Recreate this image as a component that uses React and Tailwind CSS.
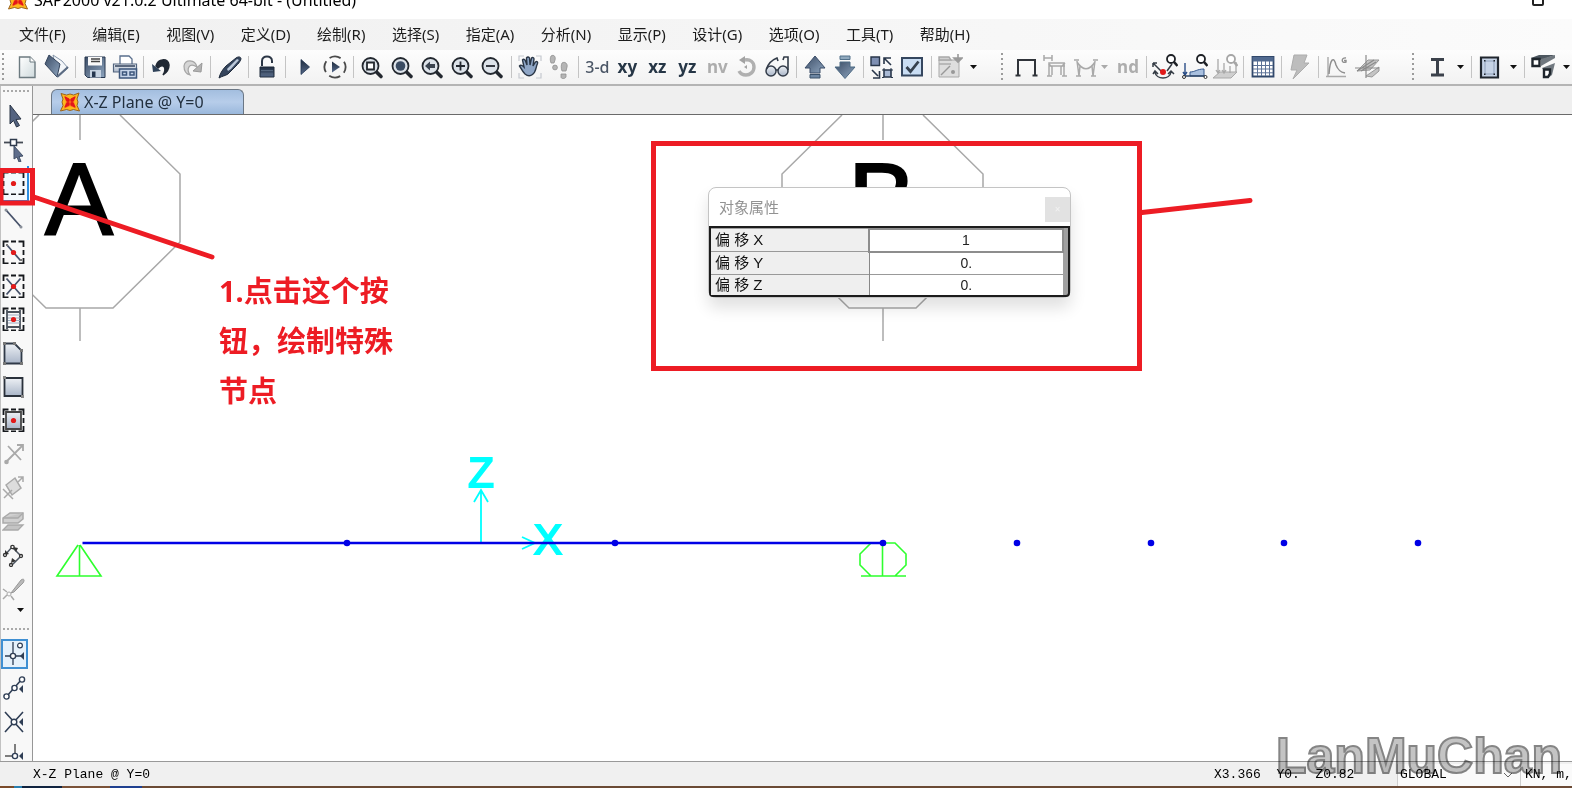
import React from "react";

const N = "#2f3e55";
const G = "#a9a9a9";

function Ico({ children, size = 26 }) {
  return (
    <svg width={size} height={size} viewBox={`0 0 ${size} ${size}`} fill="none" className="shrink-0" aria-hidden="true">
      {children}
    </svg>
  );
}

function Lens({ children }) {
  return (
    <Ico>
      <path d="M17 17.500l5 5" stroke="#23282f" strokeWidth="3.600" strokeLinecap="round" />
      <circle cx="11.500" cy="12" r="8" fill="#dde3ea" stroke="#23282f" strokeWidth="1.800" />
      {children}
    </Ico>
  );
}

function Star({ size = 20 }) {
  return (
    <svg width={size} height={size} viewBox="0 0 20 20" className="shrink-0" aria-hidden="true">
      <path d="M1 1.500L6.500 3 10 2 13.500 3 19 1 17 7 18 10 17 13.500 19.500 19 13.500 17.500 10 18.500 6.500 17.500.5 19 3 13.500 2 10 3 7z" fill="#fdb91e" stroke="#9a6420" strokeWidth="1" />
      <path d="M4 3.500l6 3.500 6-3.500L14 10l2 6.500L10 14l-6 2.500L6 10z" fill="#f9651b" />
      <path d="M5 5l4 2v2.200H7zM15 5l-4 2v2.200h2zM5 15l4-2v-2.200H7zM15 15l-4-2v-2.200h2z" fill="#e3151b" stroke="#e3151b" />
    </svg>
  );
}

const Word = ({ t, dim, light }) => (
  <span className={`font-['Noto_Sans'] leading-5 ${light ? "text-[16px] font-medium text-[#4b5666]" : dim ? "text-[17px] font-bold text-[#adadad]" : "text-[17px] font-bold text-[#263646]"}`}>{t}</span>
);

const miniLens = (c) => (
  <>
    <circle cx="19" cy="5" r="4" fill="#fff" stroke={c} strokeWidth="1.800" />
    <path d="M22 8l3.500 4" stroke={c} strokeWidth="2.600" />
  </>
);

const mainTools = [
  ["新建", <Ico><path d="M5.500 3h10.500l5 5v15.500h-15.500z" fill="url(#paper)" stroke="#6c7a80" strokeWidth="1.400" /><path d="M16 3v5h5" fill="#fff" stroke="#6c7a80" /></Ico>],
  ["打开", <Ico><path d="M9 1l9 6 6 7-10 9z" fill="#f3f6f9" stroke="#8797ab" /><path d="M5 1l11 9-3 13L1 10z" fill="url(#slate)" stroke="#34445c" /><path d="M13 23l11-10" stroke="#5b6b82" strokeWidth="2" /></Ico>],
  "|",
  ["保存", <Ico><path d="M3 3h20v20.500H5.500L3 21z" fill="url(#slate)" stroke="#26374f" /><path d="M6 3h14v8.500H6z" fill="#fafafa" /><path d="M9 5h9M9 7.500h9" stroke="#444" strokeWidth="1.300" /><path d="M8 16h11v7.500H8z" fill="#c6d3e2" /><path d="M10 17.500h3.500V23H10z" fill="#26374f" /></Ico>],
  ["打印", <Ico><path d="M8 10V2h9l3 3v5" fill="#fff" stroke="#5a6f8d" strokeWidth="1.300" /><path d="M1.500 10h23v8h-23z" fill="url(#steel)" stroke="#53657f" strokeWidth="1.200" /><path d="M3 12h20" stroke="#3c4c64" strokeWidth="1.600" /><path d="M7.500 15h17v9h-17z" fill="#c8d6ea" stroke="#3c567b" strokeWidth="1.500" /><path d="M10.500 18h4v3h-4zM18 18h4v3h-4z" stroke="#3c567b" strokeWidth="1.500" /></Ico>],
  "|",
  ["撤销", <Ico><path d="M7 12C9 4 19 4 20 11c0 5-3 8-6 10 4-6 1-13-5-7z" fill="#202833" stroke="#202833" strokeWidth="1.500" /><path d="M3 10l1 8 8-1z" fill="#2f4259" /></Ico>],
  ["重做", <Ico><path d="M18 13C16 5 6 5 5 12c0 5 2 8 6 9-4-6-1-13 7-8z" fill="#d6d6d6" stroke="#a5a5a5" strokeWidth="1.200" /><path d="M23 9l-1 9-8-1z" fill="#b3b3b3" stroke="#999" /></Ico>],
  "|",
  ["编辑", <Ico><path d="M2 24c1-4 3-8 7-12L19 4c3-2 5-1 5 1-1 3-3 5-5 7l-8 8c-3 2-6 2-9 4z" fill="#35455d" stroke="#1e2a3b" /><path d="M10 15L20 5l2 1-8 9-3 2z" fill="#bcc9da" /></Ico>],
  "|",
  ["解锁", <Ico><path d="M8 12V7c0-6 10-6 10 0v2" stroke="#2b3645" strokeWidth="2" /><path d="M6 13h14v10H6z" fill="url(#dark)" stroke="#1f2a3a" /><path d="M7 16.500h12M7 20h12" stroke="#55677f" /></Ico>],
  "|",
  ["运行", <Ico><path d="M9 5.500l8.500 7.500L9 20.500z" fill="url(#dark)" stroke="#1f3350" strokeWidth=".8" /></Ico>],
  ["运行分析", <Ico><circle cx="13" cy="13" r="10.500" stroke="#4a4a4a" strokeWidth="1.800" strokeDasharray="11.500 4.993" transform="rotate(-121 13 13)" /><path d="M10 7.500l8 5.500-8 5.500z" fill="url(#dark)" /></Ico>],
  "|",
  ["窗口缩放", <Lens><path d="M8 8.500h7v7H8z" stroke="#23282f" strokeWidth="1.800" fill="#fff" /></Lens>],
  ["全图", <Lens><circle cx="11.500" cy="12" r="4.800" fill="#3b4c63" /></Lens>],
  ["上一视图", <Lens><path d="M6 12l5-4.500V10h5v4h-5v2.500z" fill="#3b4450" /></Lens>],
  ["放大", <Lens><path d="M11.500 7.500v9M7 12h9" stroke="#23282f" strokeWidth="1.800" /></Lens>],
  ["缩小", <Lens><path d="M7 12h9" stroke="#23282f" strokeWidth="1.800" /></Lens>],
  "|",
  ["平移", <Ico><path d="M2 7V2h5M19 2h5v5M24 19v5h-5M7 24H2v-5" stroke="#c5c9cf" strokeWidth="1.200" /><path d="M8 20C5 17 4 14 2.500 12c1-1.500 3-.5 4.500 1L5.500 6c1-1.500 2.500-.5 3 1l1.500 4-.5-7c1-1.500 2.500-1 3 0l.5 7 1.500-7c1-1 2.500-.5 2.500 1l-1 7 2.500-4c1.500-1 2.500 0 2 1.500-2 4-1 8-5 11-2 1.500-5 1.500-7.500-.5z" fill="#8fa6c6" stroke="#2a3646" strokeWidth="1.400" /></Ico>],
  ["漫游", <Ico><g fill="#b5b5b5" stroke="#8f8f8f" strokeWidth=".8"><path d="M4 2c3-2 5 1 4 4l-1 3H4c-1-3-1-5 0-7zM15 9c3-2 6 1 5 4l-1 4h-4c-1-3-1-6 0-8z" /><circle cx="8" cy="13.500" r="2.400" /><path d="M14 20h5v3c-1 2-5 2-5 0z" /></g></Ico>],
  "|",
  ["三维视图", <Word t="3-d" light />],
  ["xy 平面", <Word t="xy" />],
  ["xz 平面", <Word t="xz" />],
  ["yz 平面", <Word t="yz" />],
  ["命名视图", <Word t="nv" dim />],
  ["旋转", <Ico><path d="M11 6c5-1 9 2 9 7s-4 8-8 8-6-2-7-4" stroke="#b0b0b0" strokeWidth="3.400" /><path d="M11 2v8L5 6zM13 11v4l-3-2z" fill="#a3a3a3" /></Ico>],
  ["透视切换", <Ico><circle cx="7" cy="17" r="5" fill="url(#steel)" stroke="#333c49" strokeWidth="1.500" /><circle cx="19" cy="17" r="5" fill="url(#steel)" stroke="#333c49" strokeWidth="1.500" /><path d="M2.500 15C4 10 8 6 13 4l1 3M24 16V3h-4l-1 3M12 16h2" stroke="#333c49" strokeWidth="1.600" /></Ico>],
  "|",
  ["上移", <Ico><path d="M13 2l10 12h-5v5H8v-5H3z" fill="url(#slate)" stroke="#3a4d69" /><path d="M8 20.500h10v3.500H8z" fill="#6d86a3" stroke="#3a5069" /></Ico>],
  ["下移", <Ico><path d="M13 24.500L3 13h5V8h10v5h5z" fill="url(#slate)" stroke="#4d6a84" /><path d="M8 2h10v3.500H8z" fill="#8fa8bd" stroke="#52708a" /></Ico>],
  "|",
  ["对象收缩", <Ico><path d="M2 3h8.500v8.500H2z" fill="#7e8fb2" stroke="#28364a" strokeWidth="1.400" /><path d="M15 16h7v7h-7z" fill="#a9b9d4" stroke="#28364a" strokeWidth="1.600" /><path d="M13 16h2M22 16h2M13 23.500h2M22 23.500h2M15 14v2M22 14v2" stroke="#28364a" /><path d="M22 11l-7-7M15 10V4H22M3 16l6 6M10.500 17v7H4" stroke="#28364a" strokeWidth="1.600" /></Ico>],
  ["显示选项", <Ico><path d="M3 4h20v17.500H3z" fill="#c9ddf3" stroke="#35475f" strokeWidth="2" /><path d="M7.500 13l4 4.500 8-10" stroke="#35414f" strokeWidth="2.800" /></Ico>],
  "|",
  ["指定", <Ico><path d="M2 6h20v17H2z" fill="#dedede" stroke={G} /><path d="M2 3h10l2 3H2z" fill="#d0d0d0" stroke={G} strokeWidth="1.400" /><path d="M2 10h12" stroke={G} strokeWidth="1.400" /><path d="M4 21L13 12" stroke="#999" strokeWidth="1.400" /><circle cx="16" cy="18" r="2" fill="#999" /><path d="M21 0v5M17 4h8l-4 4z" stroke="#9a9a9a" fill="#9a9a9a" strokeWidth="1.600" /></Ico>],
  "v",
];

const structTools = [
  ["框架", <Ico><path d="M5 21V6h17v15M2.500 21.500h5M19.500 21.500h5" stroke="#30343a" strokeWidth="2" /></Ico>],
  ["框架荷载", <Ico><g stroke={G} strokeWidth="1.500"><path d="M6 22V9h15v13M4 22h5M19 22h5M1 1v6M1 4h8M9 1v6" /><path d="M9 21V13l-3-3M18 21V13l4-4M6 12h16" /></g></Ico>],
  ["变形图", <Ico><g stroke={G} strokeWidth="1.500"><path d="M4 8c6 9 12 9 18 0M4 7l2 15M22 7l-2 15M3 22h5M18 22h5M1 6h5M20 6h5M7 12l-1 10M19 12l1 10" /></g></Ico>],
  "v-",
  ["nd", <Word t="nd" dim />],
  "|",
  ["节点", <Ico><path d="M1 9l8 8M1 9h4M1 9v4M15 17l5-7M3 18c1 8 15 8 16 0M1 20l2-3 3 3M16 20l3-3 3 3" stroke="#353c45" strokeWidth="1.500" />{miniLens("#1d2025")}<circle cx="11" cy="18" r="3" fill="#e01919" /></Ico>],
  ["框架显示", <Ico><path d="M3 9v12M1 18l2 3 2-3" stroke="#2c4f88" strokeWidth="1.400" /><path d="M8 22v-4c5 0 7-3 14-3v7z" fill="#a9c0df" stroke="#35588c" /><path d="M1 22h23" stroke="#2d4566" strokeWidth="1.500" /><circle cx="2" cy="23" r="1.500" fill="#fff" stroke="#333" /><circle cx="23.500" cy="23" r="1.500" fill="#fff" stroke="#333" />{miniLens("#1d2025")}</Ico>],
  ["壳显示", <Ico><path d="M1 24l7-6h17l-6 6z" fill="#cfcfcf" stroke={G} /><path d="M6 5v14M12 9v10M18 12v7M24 8v10M4 16l2 3 2-3M10 16l2 3 2-3" stroke={G} strokeWidth="1.300" />{miniLens("#a6a6a6")}</Ico>],
  "|",
  ["表格", <Ico><path d="M2.500 3h21v19.500h-21z" fill="#fff" stroke="#31486b" strokeWidth="1.800" /><path d="M2.500 3h21v4.500h-21z" fill="#50698f" /><path d="M3 11.500h20M3 15h20M3 18.800h20M7.500 7v15M11.500 7v15M15.500 7v15M19.500 7v15" stroke="#5d7397" /></Ico>],
  "|",
  ["闪电", <Ico><path d="M7 1h13l-3 8h5L6 25l4-9H4z" fill="#bdbdbd" stroke="#adadad" /></Ico>],
  "|",
  ["曲线", <Ico><path d="M4 3v20M2 22.500h20" stroke={G} strokeWidth="1.400" /><path d="M5 20C6 4 10 2 12 11c2 5 4 7 9 8" stroke="#8f8f8f" strokeWidth="1.500" /><path d="M22 4c-5-1-5 6 0 4V6.500h-2" stroke="#8f8f8f" strokeWidth="1.400" /></Ico>],
  ["剖面", <Ico><path d="M3 17L14 6h11l-9 10zM12 22l13-9v4l-7 6z" fill="#c4c4c4" stroke="#999" /><path d="M12 1v23M1 14h24M3 17L20 6M7 17l15-9" stroke="#8a8a8a" strokeWidth="1.200" /></Ico>],
];

const sectionTools = [
  ["工字钢", <Ico><path d="M7 5.500h13M7 21h13M13.500 5v16" stroke="#3b414b" strokeWidth="3" /></Ico>],
  "v",
  "|",
  ["截面", <Ico><path d="M4 3.500h17v20H4z" fill="#c6d3e6" stroke="#20262e" strokeWidth="2.200" /><path d="M8 7h9v13H8z" stroke="#8fa0ba" /><path d="M7 6h1.500v1.500H7zM16.500 6H18v1.500h-1.500zM7 19.500h1.500V21H7zM16.500 19.500H18V21h-1.500z" fill="#20262e" /></Ico>],
  "v",
  "|",
  ["型材", <Ico><path d="M1 4l8-3h16l-14 5z" fill="#4d5760" /><path d="M11 5l14-4v3l-14 8z" fill="#70787f" /><path d="M2.500 5h7v7h-7z" fill="#fff" stroke="#1f262d" strokeWidth="2.400" /><path d="M12 14l13-5-3 12-4 3z" fill="#70787f" /><path d="M14 15.500h6v4l-2 3.500h-4z" fill="#fff" stroke="#1f262d" strokeWidth="2.400" /></Ico>],
  "v",
];

const S = ({ children }) => <Ico size={24}>{children}</Ico>;
const dash = <path d="M1.500 7v-5.500h5M9 1.500h5M16.500 1.500h5V7M21.500 10v5M21.500 18v5.500h-5M14 23.500H9M6.500 23.500h-5V18M1.500 15v-5" stroke="#15181c" strokeWidth="1.800" />;
const red = <circle cx="11.500" cy="12.500" r="2.600" fill="#e21b1b" />;

const drawTools = [
  ["选择", <S><path d="M8 1l11 14-5 .5 3.500 6-3 1.500-3-6.500L8 20z" fill="#546380" stroke="#2b3647" /></S>],
  ["修改形状", <S><path d="M2 4.500h19" stroke="#444b55" strokeWidth="1.800" /><path d="M8.500 1.500h6v6h-6z" fill="#fff" stroke="#2f3b4d" strokeWidth="1.500" /><path d="M12 8l9 10-4 .5 2 5-2 .5-2-5-3 2z" fill="#5e6d8b" stroke="#414f66" /></S>],
  ["绘制特殊节点", <S>{dash}{red}</S>],
  ["绘制框架", <S><path d="M4 4l15 17" stroke="#47526a" strokeWidth="1.800" /><circle cx="4" cy="4" r="1.500" fill="#8a909a" /><circle cx="19" cy="21" r="1.500" fill="#8a909a" /></S>],
  ["快速绘制框架", <S>{dash}<path d="M4.500 4.500l14 16" stroke="#47526a" strokeWidth="1.800" />{red}<path d="M4 4h2v2H4zM18 19h2v2h-2z" fill="#777" /></S>],
  ["快速绘制支撑", <S>{dash}<path d="M4.500 4.500l14 16M18.500 4.500l-14 16" stroke="#47526a" strokeWidth="1.800" />{red}</S>],
  ["快速绘制次梁", <S>{dash}<path d="M5 3v19M18 3v19M5 5h13M5 20h13" stroke="#4b525c" strokeWidth="1.800" /><path d="M6 8h12M6 16h12M6 11h12M6 13.500h12" stroke="#9eacc2" />{red}</S>],
  ["绘制多边形面", <S><path d="M2.500 2.500h10l7 7v13h-17z" fill="url(#steel)" stroke="#303a48" strokeWidth="1.800" /><path d="M1 1h3v3H1zM11 1h3v3h-3zM18 8h3v3h-3zM1 21h3v3H1zM18 21h3v3h-3z" fill="#777" /></S>],
  ["绘制矩形面", <S><path d="M2.500 3h18v18h-18z" fill="url(#steel)" stroke="#2a313b" strokeWidth="1.800" /><path d="M1 1h3v3H1zM19 20h3v3h-3z" fill="#888" /></S>],
  ["快速绘制面", <S>{dash}<path d="M4 4h15v17H4z" fill="url(#steel)" stroke="#444" strokeWidth="1.800" />{red}</S>],
  ["连接", <S><path d="M5 19L20 4M15 3h6v6M6 4l13 14" stroke={G} strokeWidth="1.800" /><circle cx="4.500" cy="20" r="2.300" fill={G} /></S>],
  ["面连接", <S><path d="M4 9l9-7 6 10-9 7z" fill="#ddd" stroke={G} strokeWidth="1.500" /><path d="M2 22l8-8M16 6l5-5M16 1h5v5M1 13l10 10" stroke={G} strokeWidth="1.500" /></S>],
  ["实体", <S><path d="M1 8l7-5h13v6l-5 4H1z" fill="#d0d0d0" stroke={G} strokeWidth="1.500" /><path d="M1 8h15l5-5M1 20l5-5h15l-5 5H1z" fill="#c4c4c4" stroke={G} strokeWidth="1.300" /></S>],
  ["多段线", <S><path d="M3 12l7-8 9 9-9 9" stroke="#4d5662" strokeWidth="1.500" /><path d="M3 12V7l4 4zM11 4l5 1-2 4zM9 20l1-5 4 3z" fill="#333" /><g fill="#fff" stroke="#333" strokeWidth="1.300"><circle cx="3" cy="12" r="1.500" /><circle cx="10.500" cy="4" r="1.700" /><circle cx="19" cy="13" r="1.500" /><circle cx="9" cy="22" r="1.500" /></g></S>],
  ["魔棒", <S><path d="M9 16L19 3c3-2 4 0 2 3L12 15z" fill="#b9b9b9" stroke="#999" /><path d="M1 22l4-4M1 12l4 3M12 23l-3-4" stroke={G} strokeWidth="1.500" /><circle cx="7" cy="17" r="2" stroke={G} /></S>],
];

const snapTools = [
  ["捕捉到点", <S><path d="M10 0v11M10 17v6M2 14h6M12 14h6" stroke={N} strokeWidth="1.300" /><circle cx="10" cy="14" r="2.600" fill="#fff" stroke={N} strokeWidth="1.400" /><circle cx="17" cy="3.500" r="2.400" fill="#fff" stroke={N} strokeWidth="1.200" /><path d="M21 10v8l-4-4z" fill={N} /></S>],
  ["捕捉到中点", <S><path d="M4 20L19 3" stroke={N} strokeWidth="1.600" /><g fill="#fff" stroke={N} strokeWidth="1.400"><circle cx="3.500" cy="20.500" r="2.600" /><circle cx="19" cy="3.500" r="2.600" /><circle cx="11.500" cy="12" r="2.600" /></g><path d="M20 9v8l-4-4z" fill={N} /></S>],
  ["捕捉到交点", <S><path d="M2 2l18 20M20 2L2 22" stroke={N} strokeWidth="1.600" /><circle cx="11" cy="12" r="2.800" fill="#fff" stroke={N} strokeWidth="1.400" /><path d="M20 8v8l-4-4z" fill={N} /></S>],
  ["捕捉到垂足", <S><path d="M12 0v12M2 12h8" stroke="#555" strokeWidth="1.500" /><circle cx="12" cy="12" r="2.600" fill="#fff" stroke={N} strokeWidth="1.400" /><path d="M20 8v8l-4-4z" fill={N} /></S>],
];

function Grip({ items, className = "" }) {
  return (
    <div className={`flex shrink-0 items-center ${className}`}>
      {items.map((it, i) =>
        it === "|" ? (
          <span key={i} className="flex min-w-[7px] flex-1 justify-center"><span className="h-[22px] w-px bg-[#c4c4c4]" /></span>
        ) : it === "v" || it === "v-" ? (
          <button key={i} aria-label="更多" className={it === "v" ? "flex w-4 shrink-0 justify-center" : "flex w-3 shrink-0 justify-start"}>
            <svg width="7" height="4" viewBox="0 0 7 4"><path d="M0 0h7L3.500 4z" fill={it === "v" ? "#111" : "#aaa"} /></svg>
          </button>
        ) : (
          <button key={i} aria-label={it[0]} className="flex h-8 w-[30px] shrink-0 items-center justify-center">{it[1]}</button>
        )
      )}
    </div>
  );
}

const VDots = () => <span className="h-7 w-[2px] shrink-0 bg-[repeating-linear-gradient(180deg,#9b9b9b_0_2px,transparent_2px_5px)]" />;
const HDots = () => <div className="ml-[2px] h-[2px] w-[26px] shrink-0 bg-[repeating-linear-gradient(90deg,#a9a9a9_0_2px,transparent_2px_4px)]" />;

const menus = ["文件(F)", "编辑(E)", "视图(V)", "定义(D)", "绘制(R)", "选择(S)", "指定(A)", "分析(N)", "显示(P)", "设计(G)", "选项(O)", "工具(T)", "帮助(H)"];

function Model() {
  const grid = (cx) => (
    <path d={`M${cx} 0v25M${cx} 193v33M${cx - 41} 0l-60 59v68l67 66h67l67-66v-68l-60-59`} stroke="#a8a8a8" strokeWidth="1.500" />
  );
  return (
    <svg className="absolute inset-0 h-full w-full" fill="none" aria-label="模型">
      {grid(47)}
      {grid(850)}
      <g fill="#000" stroke="#000" strokeWidth="2" fontFamily="Liberation Sans, sans-serif" fontSize="102" textAnchor="middle">
        <text x="46" y="120">A</text>
        <text x="849" y="119">B</text>
      </g>
      <path d="M448 427v-51M441 387l7-12 7 12M489 422l13 6-13 6" stroke="#00ffff" strokeWidth="1.800" />
      <g fill="#00ffff" stroke="#00ffff" strokeWidth="2" fontFamily="Liberation Sans, sans-serif" fontSize="42" textAnchor="middle">
        <text x="448" y="372">Z</text>
        <text x="515" y="439">X</text>
      </g>
      <g stroke="#2eff2e" strokeWidth="1.600">
        <path d="M45 430l-21 31h44l-21-31M46.500 430v31" />
        <path d="M838 461l-11-11v-11l11-11h24l11 11v11l-11 11M828 461h45M849.500 428v33" />
      </g>
      <path d="M49.500 428H849.500" stroke="#0000e6" strokeWidth="2.400" />
      {[314, 582, 850, 984, 1118, 1251, 1385].map((x) => (
        <circle key={x} cx={x} cy="428" r="3.300" fill="#0000e6" />
      ))}
    </svg>
  );
}

function Properties() {
  return (
    <section className="absolute left-[675px] top-[72px] w-[363px] rounded-lg border border-[#c4c4c4] bg-white shadow-[0_10px_16px_rgba(0,0,0,0.12)]">
      <header className="flex h-[38px] items-center justify-between pl-[10px]">
        <h2 className="text-[15px] leading-5 text-[#929292]">对象属性</h2>
        <button aria-label="关闭" className="mt-1 flex size-[25px] items-center justify-center bg-[#e2e2e2] text-[10px] text-[#f2f2f2]">×</button>
      </header>
      <div className="rounded-b border-2 border-[#1c1c1c] bg-[#a0a0a0] pr-1">
        <table className="w-full border-collapse">
          <tbody>
            {[["X", "1"], ["Y", "0."], ["Z", "0."]].map(([k, v], i) => (
              <tr key={k} className={i < 2 ? "border-b border-[#999]" : ""}>
                <th className="w-[158px] border-r border-[#888] bg-[#efefef] p-0 pl-1 text-left font-normal">
                  <label htmlFor={`off${k}`} className={`block font-['Liberation_Sans','Noto_Sans_CJK_SC',sans-serif] text-[15px] text-[#111] ${i < 2 ? "leading-[22px]" : "leading-5"}`}>偏 移 {k}</label>
                </th>
                <td className={i === 0 ? "border-2 border-[#8d8d8d] bg-white p-0" : "bg-white p-0"}>
                  <input id={`off${k}`} defaultValue={v} className="block h-[18px] w-full bg-transparent text-center font-['Liberation_Sans',sans-serif] text-[14px] leading-[18px] text-[#222] outline-none" />
                </td>
              </tr>
            ))}
          </tbody>
        </table>
      </div>
    </section>
  );
}

export default function App() {
  return (
    <div className="relative flex h-screen flex-col overflow-hidden bg-white font-['Noto_Sans','Noto_Sans_CJK_SC',sans-serif] text-[#1c1c1c]">
      <svg className="absolute size-0" aria-hidden="true">
        <defs>
          <linearGradient id="paper" x1="0" y1="0" x2="1" y2="1"><stop stopColor="#fff" /><stop offset="1" stopColor="#cfdadd" /></linearGradient>
          <linearGradient id="steel" x1="0" y1="0" x2="0" y2="1"><stop stopColor="#eef1f5" /><stop offset="1" stopColor="#a9b5c8" /></linearGradient>
          <linearGradient id="slate" x1="0" y1="0" x2="1" y2="1"><stop stopColor="#3c4d66" /><stop offset="1" stopColor="#8ea5bf" /></linearGradient>
          <linearGradient id="dark" x1="0" y1="0" x2="0" y2="1"><stop stopColor="#1f2c3e" /><stop offset="1" stopColor="#55698a" /></linearGradient>
        </defs>
      </svg>

      <header className="flex h-[19px] shrink-0 items-end justify-between pl-2 pr-7">
        <div className="flex h-[38px] items-center gap-[6px]">
          <Star />
          <h1 className="text-[16px] text-black">SAP2000 v21.0.2 Ultimate 64-bit - (Untitled)</h1>
        </div>
        <button aria-label="最大化" className="mb-[13px] h-3 w-3 rounded-[2px] border-2 border-[#222]" />
      </header>

      <nav className="h-[31px] shrink-0 bg-gradient-to-r from-[#f0f0f0] to-[#fbfbfb] pl-[19px]">
        <div className="flex h-[30px] w-[951px] items-center justify-between">
          {menus.map((m) => (
            <button key={m} className="shrink-0 text-[15px] leading-5">{m}</button>
          ))}
        </div>
      </nav>

      <div className="flex h-[36px] shrink-0 items-center border-b-2 border-[#b4b4b4] bg-gradient-to-b from-[#fdfdfd] to-[#f2f2f2] pl-[2px]">
        <VDots />
        <Grip items={mainTools} className="ml-2 w-[969px]" />
        <span className="w-5 shrink-0" />
        <VDots />
        <Grip items={structTools} className="ml-2 w-[371px]" />
        <span className="w-[30px] shrink-0" />
        <VDots />
        <Grip items={sectionTools} className="ml-2" />
      </div>

      <div className="flex min-h-0 flex-1">
        <aside className="flex w-[33px] shrink-0 flex-col overflow-hidden border-l border-r border-l-[#c2c2c2] border-r-[#979797] bg-[#f8f8f8] pt-1">
          <HDots />
          <div className="mt-[7px] flex h-[507px] shrink-0 flex-col">
            {drawTools.map(([l, ic]) => (
              <button key={l} aria-label={l} className={`flex w-[26px] flex-1 items-center justify-center ${l === "绘制特殊节点" ? "border-b border-[#2b8de0] bg-[#f4f9fd] shadow-[2px_0_0_#2b8de0]" : ""}`}>{ic}</button>
            ))}
          </div>
          <button aria-label="更多" className="ml-4 mt-[2px] h-1 shrink-0">
            <svg width="7" height="4" viewBox="0 0 7 4"><path d="M0 0h7L3.500 4z" fill="#111" /></svg>
          </button>
          <div className="mt-4 shrink-0"><HDots /></div>
          <div className="mt-[9px] flex shrink-0 flex-col gap-1">
            {snapTools.map(([l, ic], i) => (
              <button key={l} aria-label={l} className={`flex h-[30px] w-[27px] items-center justify-center ${i === 0 ? "border-2 border-[#3f8fd2] bg-[#e6f1fb]" : ""}`}>{ic}</button>
            ))}
          </div>
        </aside>

        <main className="flex min-w-0 flex-1 flex-col">
          <div className="flex h-[29px] shrink-0 items-end border-b border-[#6a6a6a] bg-[#efefef] pl-[18px]">
            <button className="flex h-[25px] w-[193px] items-center gap-1 rounded-t-md border border-b-0 border-[#6b7785] bg-gradient-to-b from-[#a3bedf] via-[#b7cdea] to-[#9ab8dc] pl-2 text-[16px] leading-5 text-[#22303f]">
              <Star />
              X-Z Plane @ Y=0
            </button>
          </div>
          <div className="relative min-h-0 flex-1 overflow-hidden bg-white">
            <Model />
            <Properties />
          </div>
        </main>
      </div>

      <footer className="flex h-[25px] shrink-0 items-center border-t border-[#999] bg-[#f0f0f0] pt-[2px] font-['Liberation_Mono',monospace] text-[13px] text-black">
        <span className="flex-1 pl-[33px]">X-Z Plane @ Y=0</span>
        <span className="w-[183px] shrink-0 whitespace-pre">{"X3.366  Y0.  Z0.82"}</span>
        <span className="relative flex h-full w-[124px] shrink-0">
          <select aria-label="坐标系" className="h-full w-full appearance-none border-l border-r border-[#cfcfcf] bg-[#fafafa] pl-[2px]"><option>GLOBAL</option></select>
          <svg className="pointer-events-none absolute right-2 top-2" width="10" height="7" fill="none" stroke="#666" aria-hidden="true"><path d="M1 1l4 4 4-4" /></svg>
        </span>
        <select aria-label="单位" className="h-full w-[51px] shrink-0 appearance-none overflow-hidden bg-[#fafafa] pl-1"><option>KN, m, C</option></select>
      </footer>
      <div className="h-[2px] shrink-0 bg-[linear-gradient(90deg,#7a4a2a_0_14px,#2a7fb0_14px_22px,#10233f_22px_62px,#7a5238_62px_110px,#1f3f8f_110px_142px,#6b4a35_142px)]" />

      <svg className="pointer-events-none absolute inset-0 h-full w-full mix-blend-multiply" aria-hidden="true">
        <text x="1276" y="773" fill="#c4c4c4" stroke="#858585" strokeWidth="2" fontFamily="Liberation Sans, sans-serif" fontWeight="700" fontSize="50">LanMuChan</text>
      </svg>
      <div className="pointer-events-none absolute inset-0 overflow-hidden">
        <svg className="absolute inset-0 h-full w-full" fill="none" stroke="#ed1c24" strokeWidth="5" aria-hidden="true">
          <path d="M0 170.500h32.500v32.500H0M1 168v37" />
          <path d="M34 197l178 60" strokeLinecap="round" />
          <path d="M653.500 143.500h486v225h-486zM1142 212.500l108-12" strokeLinecap="round" />
        </svg>
        <p className="absolute left-[219px] top-[266px] w-[185px] text-[29px] font-bold leading-[50px] text-[#ed1c24]">1.点击这个按钮，绘制特殊节点</p>
      </div>
    </div>
  );
}
